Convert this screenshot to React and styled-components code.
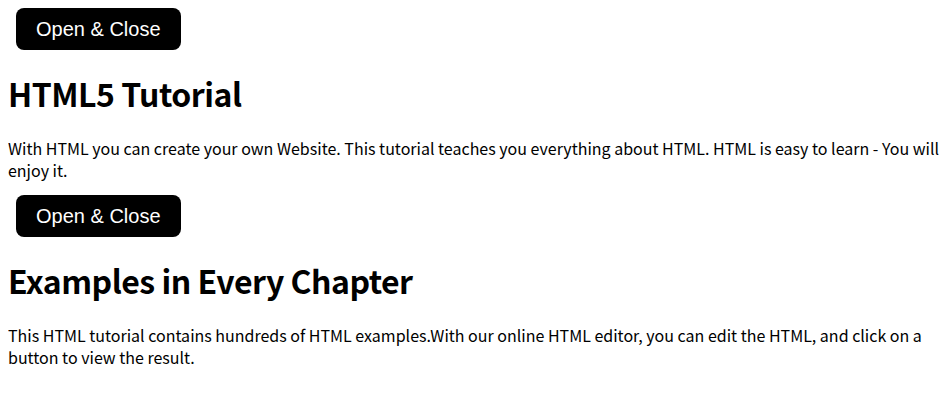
import React, { useState } from "react";
import styled, { createGlobalStyle } from "styled-components";

const GlobalStyle = createGlobalStyle`
  body {
    margin: 8px 0 8px 8px;
    background: #ffffff;
    color: #000000;
    font-family: "Noto Sans CJK KR", "Noto Sans", sans-serif;
  }
`;

const Section = styled.section`
  display: flex;
  flex-direction: column;
  align-items: flex-start;
`;

const ToggleButton = styled.button`
  display: block;
  margin: ${p => (p.$first ? "0" : "14px")} 0 0 8px;
  padding: 10px 20px;
  height: 42px;
  border: none;
  border-radius: 8px;
  background: #000000;
  color: #ffffff;
  font-family: "Liberation Sans", Arial, sans-serif;
  font-size: 20px;
  line-height: 22px;
  cursor: pointer;
`;

const Heading = styled.h1`
  margin: ${p => (p.$first ? "22px" : "22.5px")} 0 0 0;
  font-size: 32px;
  font-weight: 700;
  line-height: 42.6px;
  letter-spacing: -0.5px;
`;

const Text = styled.p`
  margin: 22px 0 0 0;
  font-size: 16px;
  line-height: 22px;
`;

const sections = [
  {
    title: "HTML5 Tutorial",
    text: "With HTML you can create your own Website. This tutorial teaches you everything about HTML. HTML is easy to learn - You will enjoy it.",
  },
  {
    title: "Examples in Every Chapter",
    text: "This HTML tutorial contains hundreds of HTML examples.With our online HTML editor, you can edit the HTML, and click on a button to view the result.",
  },
];

function Collapsible({ title, text, first }) {
  const [open, setOpen] = useState(true);
  return (
    <Section>
      <ToggleButton $first={first} onClick={() => setOpen(o => !o)}>
        Open &amp; Close
      </ToggleButton>
      {open && (
        <>
          <Heading as={first ? "h1" : "h2"} $first={first}>{title}</Heading>
          <Text>{text}</Text>
        </>
      )}
    </Section>
  );
}

export default function App() {
  return (
    <>
      <GlobalStyle />
      {sections.map((s, i) => (
        <Collapsible key={s.title} title={s.title} text={s.text} first={i === 0} />
      ))}
    </>
  );
}
